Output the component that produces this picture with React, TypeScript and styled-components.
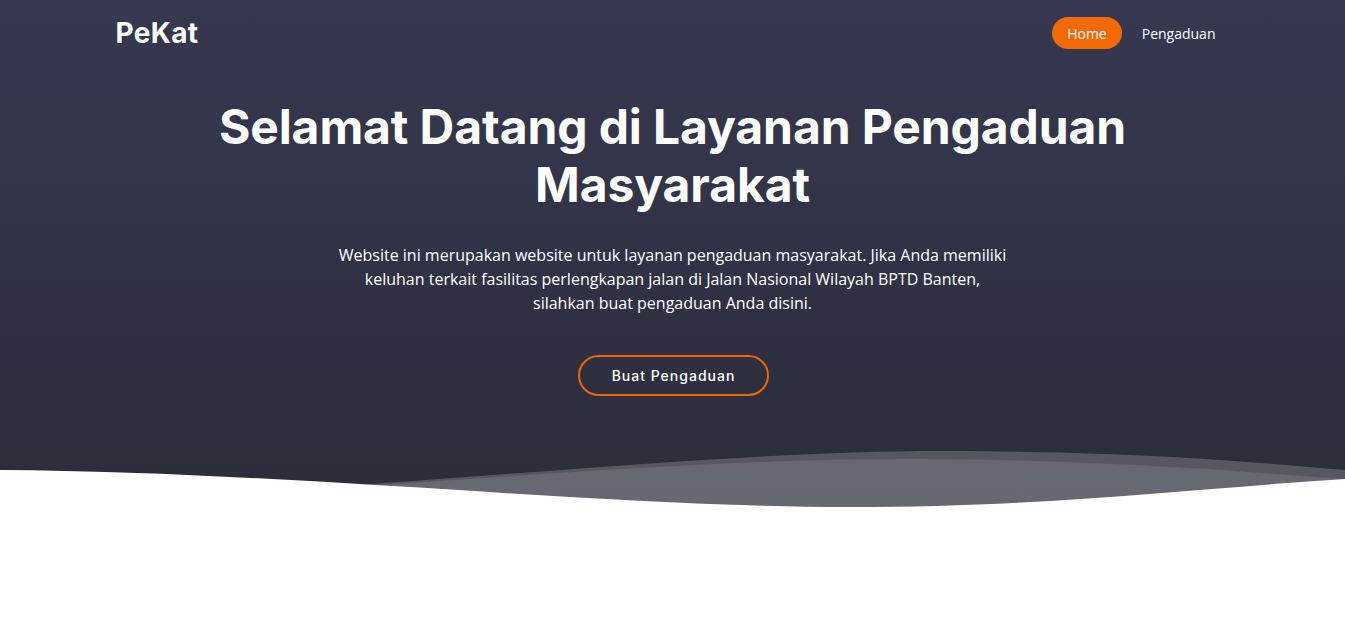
import styled, { createGlobalStyle } from "styled-components";

const GlobalStyle = createGlobalStyle`
  html, body {
    margin: 0;
    padding: 0;
    background: #fff;
    font-family: "Open Sans", sans-serif;
  }
  * {
    box-sizing: border-box;
  }
`;

const Hero = styled.section`
  height: 510px;
  display: flex;
  flex-direction: column;
  background: linear-gradient(180deg, #363851 0%, #2b2d3a 100%);
  overflow: hidden;
`;

const Container = styled.div`
  width: 1140px;
  margin: 0 auto;
  padding: 0 12px;
`;

const Header = styled(Container)`
  height: 66px;
  display: flex;
  align-items: center;
  justify-content: space-between;
`;

const Logo = styled.a`
  font-family: "Inter", "Liberation Sans", sans-serif;
  font-size: 28px;
  font-weight: 700;
  letter-spacing: 0.3px;
  line-height: 1;
  color: #fff;
  text-decoration: none;
  padding-left: 1px;
`;

const Nav = styled.nav`
  display: flex;
  align-items: center;
`;

const NavLink = styled.a<{ $active?: boolean }>`
  display: flex;
  align-items: center;
  height: 32px;
  padding: 0 15px;
  margin-left: 5px;
  border-radius: 50px;
  font-family: "Open Sans", sans-serif;
  font-size: 14px;
  color: #fff;
  text-decoration: none;
  background: ${({ $active }) => ($active ? "#f36a05" : "transparent")};
  cursor: pointer;
`;

const Content = styled(Container)`
  flex: 1;
  padding-top: 32px;
  text-align: center;
  display: flex;
  flex-direction: column;
  align-items: center;
`;

const Title = styled.h2`
  margin: 0 0 30px;
  font-family: "Inter", "Liberation Sans", sans-serif;
  font-size: 48px;
  font-weight: 700;
  letter-spacing: -0.1px;
  line-height: 1.2;
  color: #fff;
`;

const Lead = styled.p`
  width: 670px;
  margin: 0 auto 40px;
  font-size: 16px;
  line-height: 24px;
  color: #fff;
`;

const CtaButton = styled.a`
  display: inline-block;
  padding: 11px 32px;
  margin-left: 2px;
  border: 2px solid #ef6603;
  border-radius: 50px;
  font-family: "Inter", "Liberation Sans", sans-serif;
  font-size: 14px;
  font-weight: 500;
  letter-spacing: 1px;
  line-height: 15px;
  color: #fff;
  text-decoration: none;
  cursor: pointer;
`;

const Waves = styled.svg`
  display: block;
  width: 100%;
  height: 60px;
  flex-shrink: 0;
`;

export default function App() {
  return (
    <>
      <GlobalStyle />
      <Hero>
        <Header as="header">
          <Logo>PeKat</Logo>
          <Nav>
            <NavLink $active>Home</NavLink>
            <NavLink>Pengaduan</NavLink>
          </Nav>
        </Header>

        <Content>
          <Title>
            Selamat Datang di Layanan Pengaduan
            <br />
            Masyarakat
          </Title>
          <Lead>
            Website ini merupakan website untuk layanan pengaduan masyarakat. Jika Anda memiliki
            keluhan terkait fasilitas perlengkapan jalan di Jalan Nasional Wilayah BPTD Banten,
            silahkan buat pengaduan Anda disini.
          </Lead>
          <CtaButton>Buat Pengaduan</CtaButton>
        </Content>

        {/* three wave layers: two translucent bands behind the white one */}
        <Waves viewBox="0 0 1345 60" preserveAspectRatio="none">
          <path d="M0 54 C380 42, 700 0, 950 1 C1150 2, 1250 12, 1345 20 V60 H0 Z" fill="rgba(255,255,255,0.2)" />
          <path d="M0 54 C380 42, 650 9, 900 9 C1100 9, 1250 22, 1345 29 V60 H0 Z" fill="rgba(255,255,255,0.1)" />
          <path d="M0 20 C300 22, 600 57, 850 57 C1050 57, 1200 38, 1345 29 V60 H0 Z" fill="#fff" />
        </Waves>
      </Hero>
    </>
  );
}
